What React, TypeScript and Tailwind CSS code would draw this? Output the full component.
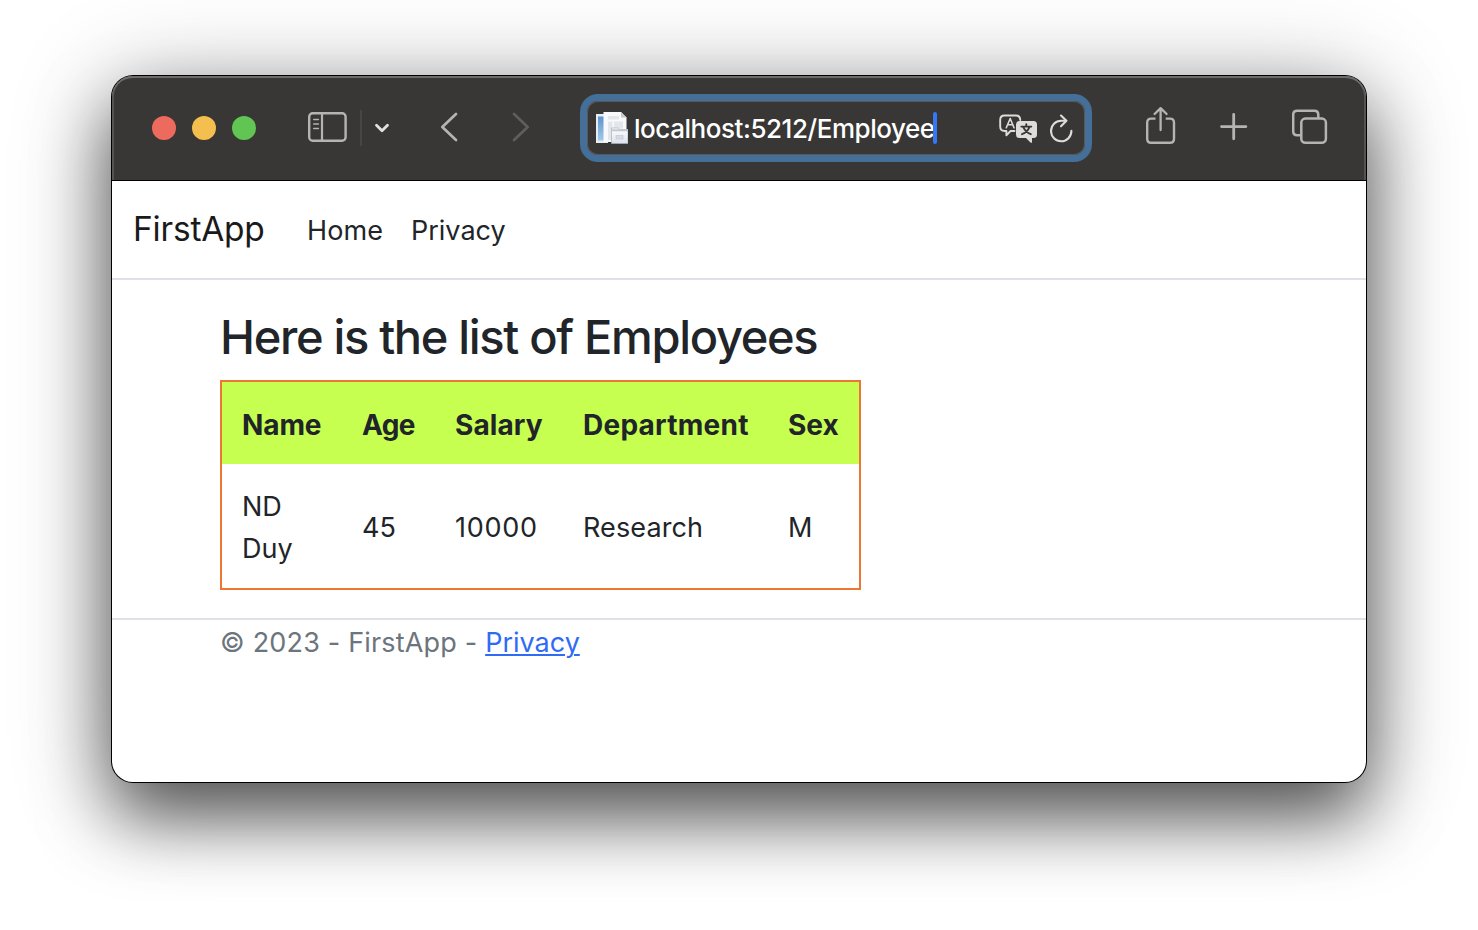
import React from "react";

const columns = [
  { label: "Name", width: "w-[120px]", head: "tracking-[-0.1px]", body: "tracking-[0px]" },
  { label: "Age", width: "w-[93px]", head: "tracking-[-0.6px]", body: "tracking-[0px]" },
  { label: "Salary", width: "w-[128px]", head: "tracking-[0.1px]", body: "tracking-[0.7px]" },
  { label: "Department", width: "w-[205px]", head: "tracking-[0.25px]", body: "tracking-[0.1px]" },
  { label: "Sex", width: "w-[91px]", head: "tracking-[0px]", body: "tracking-[-0.2px]" },
];

const employees = [["ND Duy", "45", "10000", "Research", "M"]];

function SidebarIcon() {
  return (
    <svg width="40" height="48" viewBox="0 0 40 48" fill="none" stroke="#b5b4b3" className="shrink-0">
      <rect x="1.2" y="9.2" width="36.4" height="27.6" rx="3.5" strokeWidth="2.4" />
      <path d="M14 9v28" strokeWidth="2.2" />
      <path d="M5.8 15.5h4.6M5.8 20h4.6M5.8 24.5h4.6" strokeWidth="1.6" strokeLinecap="round" />
    </svg>
  );
}

function ChevronDown() {
  return (
    <svg width="16" height="48" viewBox="0 0 16 48" fill="none" className="shrink-0">
      <path d="M2.5 21.2L8 26.7l5.5-5.5" stroke="#e2e1e0" strokeWidth="2.8" strokeLinecap="round" strokeLinejoin="round" />
    </svg>
  );
}

function BackIcon() {
  return (
    <svg width="18" height="48" viewBox="0 0 18 48" fill="none" className="shrink-0">
      <path d="M16 10L2.3 23L16 36" stroke="#b5b4b3" strokeWidth="2.7" strokeLinecap="round" strokeLinejoin="round" />
    </svg>
  );
}

function ForwardIcon() {
  return (
    <svg width="18" height="48" viewBox="0 0 18 48" fill="none" className="shrink-0">
      <path d="M2 10L15.7 23L2 36" stroke="#5f5e5d" strokeWidth="2.7" strokeLinecap="round" strokeLinejoin="round" />
    </svg>
  );
}

function PageIcon() {
  return (
    <svg width="32" height="48" viewBox="0 0 32 48" className="shrink-0">
      <defs>
        <linearGradient id="sheet" x1="0" y1="0" x2="0" y2="1">
          <stop offset="0" stopColor="#ffffff" />
          <stop offset="1" stopColor="#dde2ec" />
        </linearGradient>
        <linearGradient id="blue" x1="0" y1="0" x2="0" y2="1">
          <stop offset="0" stopColor="#5a94cc" />
          <stop offset="1" stopColor="#a3c8e9" />
        </linearGradient>
      </defs>
      <path d="M0 10h12v29H0z" fill="#e9ecf2" />
      <path d="M2 12.5h6v24H2z" fill="url(#blue)" />
      <path d="M7.5 8H25l5.5 5.5V38h-23z" fill="#f8f9fa" />
      <path d="M25 8v5.5h5.5z" fill="#c8c9cb" />
      <path d="M12 12h11v3.5H12zM12 17.5h4.5V36H12zM18 17.5h9v7h-9z" fill="#e3e6ea" />
      <path d="M15.5 24h7l1 1.5H32v14H15.5z" fill="url(#sheet)" stroke="#a9b0bd" strokeWidth="0.7" />
      <path d="M16 25.3h16v2H16z" fill="#c3c8cf" />
      <rect x="20" y="31.5" width="7" height="3.5" fill="#d6dbe3" stroke="#bfc4cd" strokeWidth="0.6" />
    </svg>
  );
}

function TranslateIcon() {
  return (
    <svg width="40" height="48" viewBox="0 0 40 48" fill="none" className="shrink-0">
      <path
        d="M15.5 27H11.5L7.4 31.3V27H5.5Q1.2 27 1.2 22.5V16Q1.2 11.5 5.5 11.5H17Q21 11.5 21.3 16"
        stroke="#dddcdc"
        strokeWidth="1.9"
        strokeLinecap="round"
        strokeLinejoin="round"
      />
      <path d="M7.3 23.7L11.2 14.5L15 23.7M8.6 20.7h5.2" stroke="#dddcdc" strokeWidth="1.6" strokeLinecap="round" strokeLinejoin="round" />
      <path d="M20.5 17H34.5Q38 17 38 20.5V30.5Q38 34 34.5 34H33V38.4Q32.5 39.3 31.5 38.4L27 34H20.5Q17 34 17 30.5V20.5Q17 17 20.5 17Z" fill="#dddcdc" />
      <path d="M27.3 20.2v2M22.3 22.6h10M30.5 22.8Q28.5 28 23 30.2M24.2 22.8Q26.5 28 31.8 30.2" stroke="#383735" strokeWidth="1.9" strokeLinecap="round" />
    </svg>
  );
}

function ReloadIcon() {
  return (
    <svg width="24" height="48" viewBox="0 0 24 48" fill="none" stroke="#dddcdc" strokeWidth="2.1" strokeLinecap="round" strokeLinejoin="round" className="shrink-0">
      <path d="M21.4 26.9A10.2 10.2 0 1 1 11.2 16.8H16.2" />
      <path d="M11 11.5L16.4 16.8L11 22.3" />
    </svg>
  );
}

function ShareIcon() {
  return (
    <svg width="30" height="48" viewBox="0 0 30 48" fill="none" stroke="#b5b4b3" strokeWidth="2.4" strokeLinecap="round" strokeLinejoin="round" className="shrink-0">
      <path d="M9.5 14.6H5.2Q1.2 14.6 1.2 18.6V34.8Q1.2 38.8 5.2 38.8H24Q28 38.8 28 34.8V18.6Q28 14.6 24 14.6H19.7" strokeLinecap="butt" />
      <path d="M14.6 26V4.5M8.6 10L14.6 4.2L20.6 10" strokeWidth="2.3" />
    </svg>
  );
}

function PlusIcon() {
  return (
    <svg width="28" height="48" viewBox="0 0 28 48" fill="none" className="shrink-0">
      <path d="M1.5 22.6h24.4M13.7 10.4v24.4" stroke="#b5b4b3" strokeWidth="2.8" strokeLinecap="round" />
    </svg>
  );
}

function TabsIcon() {
  return (
    <svg width="36" height="48" viewBox="0 0 36 48" fill="none" stroke="#b5b4b3" strokeWidth="2.5" className="shrink-0">
      <path d="M9 31.3H5.2Q1.2 31.3 1.2 27.3V10.7Q1.2 6.7 5.2 6.7H22.3Q26.3 6.7 26.3 10.7V14" />
      <rect x="9.3" y="14.6" width="24.6" height="24.2" rx="4" />
    </svg>
  );
}

function Toolbar() {
  return (
    <header className="flex h-[105px] shrink-0 items-center rounded-t-[21px] border-b border-black bg-[#383735] pl-10 shadow-[inset_0_2px_0_#6d6c6b,inset_2px_0_0_#555453,inset_-2px_0_0_#555453]">
      <div className="flex gap-4">
        <span className="size-6 rounded-full bg-[#ed6a5f]" />
        <span className="size-6 rounded-full bg-[#f5bf4f]" />
        <span className="size-6 rounded-full bg-[#61c554]" />
      </div>
      <div className="ml-[52px] flex items-center">
        <SidebarIcon />
        <span className="ml-[12px] h-9 w-[2px] bg-[#474644]" />
        <span className="ml-[12px] flex">
          <ChevronDown />
        </span>
      </div>
      <div className="ml-[50px] flex gap-[54px]">
        <BackIcon />
        <ForwardIcon />
      </div>
      <div className="ml-[50px] flex h-[68px] w-[512px] shrink-0 items-center rounded-[18px] border-[7px] border-[#446f98] bg-[#383735] pr-[11px] pl-[9px] shadow-[inset_0_0_0_1px_#5a5755]">
        <PageIcon />
        <span className="ml-[6px] w-[300px] whitespace-nowrap pt-[2px] text-[26px] font-medium leading-8 tracking-[-0.45px] text-white">localhost:5212/Employee</span>
        <span className="-ml-px h-8 w-1 rounded-sm bg-[#3478f6]" />
        <span className="ml-auto flex gap-[11px]">
          <TranslateIcon />
          <ReloadIcon />
        </span>
      </div>
      <div className="ml-[54px] flex gap-[44px]">
        <ShareIcon />
        <PlusIcon />
        <TabsIcon />
      </div>
    </header>
  );
}

export default function App() {
  return (
    <div className="h-[930px] w-[1478px] overflow-hidden bg-white px-[112px] pt-[76px] font-['Inter',sans-serif] text-[27px] leading-[42px] text-[#212529]">
      <div className="flex h-[706px] w-[1254px] flex-col rounded-[21px] bg-white shadow-[0_0_0_1px_#000,0_36px_70px_rgba(0,0,0,0.58),0_10px_100px_rgba(0,0,0,0.3)]">
        <Toolbar />
        <nav className="flex h-[99px] shrink-0 items-center border-b-2 border-[#dee2e6] pl-[21px]">
          <a className="w-[174px] pb-[2px] text-[33.5px] tracking-[-0.2px] text-[#1a1a1b]">FirstApp</a>
          <a className="w-[104px] pt-[2px] tracking-[0.1px]">Home</a>
          <a className="pt-[2px] tracking-[0px]">Privacy</a>
        </nav>
        <main className="pl-[108px] pt-[28px]">
          <h1 className="h-[72px] whitespace-nowrap text-[47px] font-medium leading-[58px] tracking-[-1.32px]">Here is the list of Employees</h1>
          <table className="w-[641px] table-fixed border-separate border-spacing-0 border-2 border-[#ec7632]">
            <thead>
              <tr className="h-[82px] bg-[#c6ff50] text-left">
                {columns.map((c) => (
                  <th key={c.label} className={`${c.width} ${c.head} px-5 pt-[3px] pb-0 text-[28px] font-bold`}>
                    {c.label}
                  </th>
                ))}
              </tr>
            </thead>
            <tbody>
              {employees.map((row) => (
                <tr key={row[0]} className="h-[124px]">
                  {row.map((value, i) => (
                    <td key={value} className={`${columns[i].body} px-5 pt-[3px] pb-0`}>
                      {value}
                    </td>
                  ))}
                </tr>
              ))}
            </tbody>
          </table>
        </main>
        <footer className="mt-7 border-t-2 border-[#dee2e6] pl-[108px] pt-[2px] tracking-[0.18px] text-[#6c757d]">
          © 2023 - FirstApp - <a className="tracking-[0px] text-[#2f6bf5] underline decoration-2 underline-offset-[2px]">Privacy</a>
        </footer>
      </div>
    </div>
  );
}
